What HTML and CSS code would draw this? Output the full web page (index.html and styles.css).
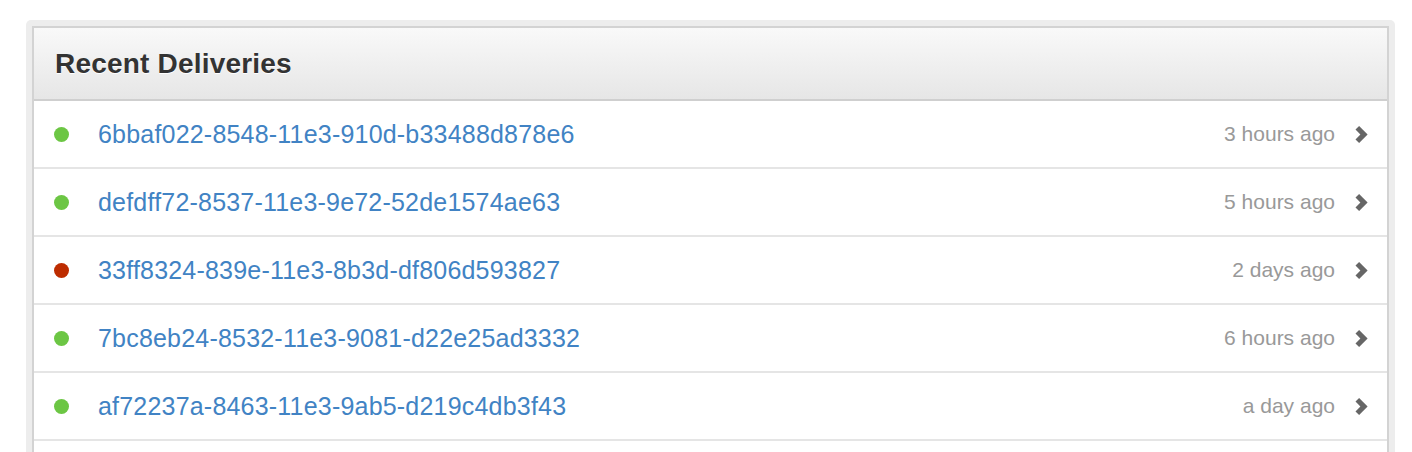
FILE: index.html
```html
<!DOCTYPE html>
<html lang="en">
  <head>
    <meta charset="UTF-8" />
    <meta name="viewport" content="width=device-width, initial-scale=1.0" />
    <title>Recent Deliveries</title>
    <link rel="stylesheet" href="styles.css">
  </head>
  <body>
    <div class="frame">
      <div class="panel">
        <h2 class="panel-title">Recent Deliveries</h2>
        <ul class="deliveries">
          <li class="delivery">
            <span class="dot success"></span>
            <a class="guid" href="#">6bbaf022-8548-11e3-910d-b33488d878e6</a>
            <span class="time">3 hours ago</span>
            <svg class="chevron" viewBox="0 0 14 17"><polygon points="0.5,3.6 4.1,0 12.6,8.5 4.1,17 0.5,13.4 5.4,8.5" /></svg>
          </li>
          <li class="delivery">
            <span class="dot success"></span>
            <a class="guid" href="#">defdff72-8537-11e3-9e72-52de1574ae63</a>
            <span class="time">5 hours ago</span>
            <svg class="chevron" viewBox="0 0 14 17"><polygon points="0.5,3.6 4.1,0 12.6,8.5 4.1,17 0.5,13.4 5.4,8.5" /></svg>
          </li>
          <li class="delivery">
            <span class="dot failure"></span>
            <a class="guid" href="#">33ff8324-839e-11e3-8b3d-df806d593827</a>
            <span class="time">2 days ago</span>
            <svg class="chevron" viewBox="0 0 14 17"><polygon points="0.5,3.6 4.1,0 12.6,8.5 4.1,17 0.5,13.4 5.4,8.5" /></svg>
          </li>
          <li class="delivery">
            <span class="dot success"></span>
            <a class="guid" href="#">7bc8eb24-8532-11e3-9081-d22e25ad3332</a>
            <span class="time">6 hours ago</span>
            <svg class="chevron" viewBox="0 0 14 17"><polygon points="0.5,3.6 4.1,0 12.6,8.5 4.1,17 0.5,13.4 5.4,8.5" /></svg>
          </li>
          <li class="delivery">
            <span class="dot success"></span>
            <a class="guid" href="#">af72237a-8463-11e3-9ab5-d219c4db3f43</a>
            <span class="time">a day ago</span>
            <svg class="chevron" viewBox="0 0 14 17"><polygon points="0.5,3.6 4.1,0 12.6,8.5 4.1,17 0.5,13.4 5.4,8.5" /></svg>
          </li>
          <li class="delivery"></li>
        </ul>
      </div>
    </div>
  </body>
</html>
```

FILE: styles.css
```css
body {
  margin: 0;
  padding: 20px 17px 0 26px;
  background-color: #fff;
  font-family: "Liberation Sans", Arial, sans-serif;
}

.frame {
  padding: 6px;
  background-color: #ededed;
  border-radius: 5px;
}

.panel {
  border: 2px solid #d3d3d3;
  background-color: #fff;
}

.panel-title {
  margin: 0;
  height: 71px;
  padding-left: 21px;
  display: flex;
  align-items: center;
  font-size: 28px;
  font-weight: bold;
  letter-spacing: 0.2px;
  color: #333;
  text-shadow: 0 1px 0 #fff;
  background: linear-gradient(#f9f9f9, #e6e6e6);
  border-bottom: 2px solid #cfcfcf;
}

.deliveries {
  list-style: none;
  margin: 0;
  padding: 0;
}

.delivery {
  height: 66px;
  padding: 0 18px 0 20px;
  display: flex;
  align-items: center;
  border-bottom: 2px solid #e5e5e5;
}

.dot {
  width: 15px;
  height: 15px;
  border-radius: 50%;
  margin-right: 29px;
  flex-shrink: 0;
}

.success {
  background-color: #6cc644;
}

.failure {
  background-color: #bd2c00;
}

.guid {
  font-size: 25px;
  letter-spacing: 0.2px;
  color: #4183c4;
  text-decoration: none;
}

.time {
  margin-left: auto;
  font-size: 21px;
  color: #999;
}

.chevron {
  width: 14px;
  height: 17px;
  margin-left: 20px;
  fill: #666;
}
```
